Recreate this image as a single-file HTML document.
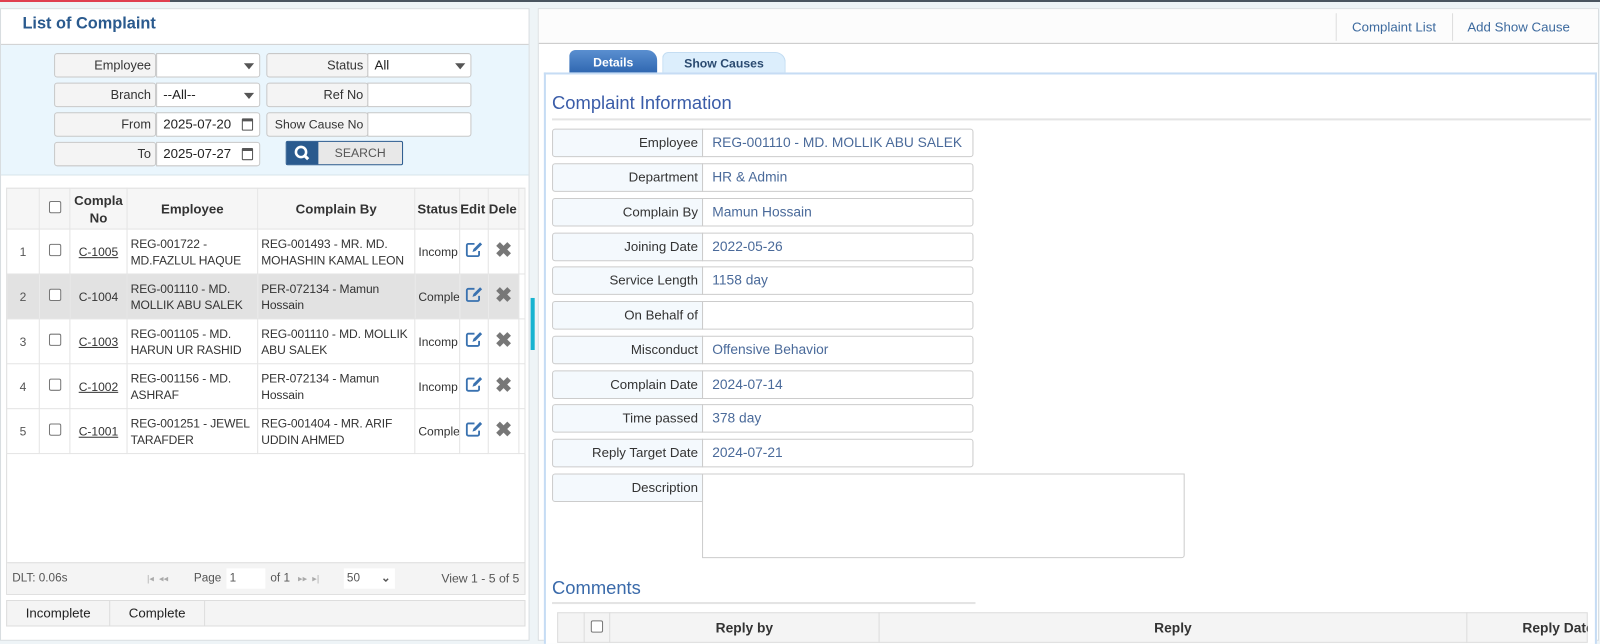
<!DOCTYPE html>
<html><head><meta charset="utf-8"><style>
*{box-sizing:border-box;margin:0;padding:0}
html,body{width:1600px;height:644px;overflow:hidden}
body{background:#eef4f7;font-family:"Liberation Sans",sans-serif;font-size:12.5px;color:#333;position:relative}
#w{position:absolute;left:0;top:0;width:1568px;height:632px;transform:scale(1.0204);transform-origin:0 0}
.a{position:absolute}
.topline{left:0;top:0;width:1600px;height:2px;background:#4a5560}
.topred{left:0;top:0;width:170px;height:2px;background:#e04050}
.panel{background:#fff;border:1px solid #d8dde0}
.lbl{position:absolute;background:#f4f4f4;border:1px solid #c8c8c8;border-radius:3px;text-align:right;padding-right:4px;line-height:22px;font-size:12.5px;color:#333}
.inp{position:absolute;background:#fff;border:1px solid #c8c8c8;border-radius:0 3px 3px 0;line-height:22px;padding-left:6px;font-size:13px;color:#222}
.caret{position:absolute;right:5px;top:9px;width:0;height:0;border-left:5px solid transparent;border-right:5px solid transparent;border-top:6px solid #555}
.cal{position:absolute;right:6px;top:5px;width:11px;height:12px;border:1.5px solid #555;border-top-width:3px;border-radius:1px}
table{border-collapse:collapse;table-layout:fixed}
.g td,.g th{border:1px solid #e4e4e4;overflow:hidden;white-space:nowrap;font-size:11.8px;line-height:16px}
.g th{background:#f6f6f6;font-weight:bold;font-size:13px;color:#333;height:40px}
.g td{height:44px;padding:0 3px;color:#333}
.g td.w{white-space:normal;letter-spacing:-0.1px}
.cb{display:inline-block;width:12px;height:12px;border:1px solid #777;border-radius:2px;background:#fff}
.u{text-decoration:underline}
.x{font-size:20px;font-weight:bold;color:#777;line-height:16px}
.rl{position:absolute;left:541px;width:148px;height:28px;background:#f4f9fd;border:1px solid #ccc;border-radius:3px 0 0 3px;text-align:right;padding-right:4px;line-height:26px;font-size:13px;color:#333}
.rv{position:absolute;left:688px;width:266px;height:28px;background:#fff;border:1px solid #ccc;border-radius:0 3px 3px 0;padding-left:9px;line-height:26px;font-size:13.5px;color:#4a6a9a}
.pg{color:#aaa;font-size:9px}
</style></head><body>
<div class="a topline"></div><div class="a topred"></div>
<div id="w">
<!-- LEFT PANEL -->
<div class="a panel" style="left:0;top:8px;width:519px;height:620px"></div>
<div class="a" style="left:22px;top:15px;font-size:16px;font-weight:bold;color:#2a5a8e">List of Complaint</div>
<div class="a" style="left:1px;top:43px;width:517px;height:1px;background:#ccc"></div>
<div class="a" style="left:1px;top:44px;width:517px;height:128px;background:#eaf6fd;border-bottom:1px solid #d8e4ea"></div>

<div class="lbl" style="left:53px;top:52px;width:100px;height:24px">Employee</div>
<div class="inp" style="left:153px;top:52px;width:102px;height:24px"><span class="caret"></span></div>
<div class="lbl" style="left:53px;top:81px;width:100px;height:24px">Branch</div>
<div class="inp" style="left:153px;top:81px;width:102px;height:24px">--All--<span class="caret"></span></div>
<div class="lbl" style="left:53px;top:110px;width:100px;height:24px">From</div>
<div class="inp" style="left:153px;top:110px;width:102px;height:24px">2025-07-20<span class="cal"></span></div>
<div class="lbl" style="left:53px;top:139px;width:100px;height:24px">To</div>
<div class="inp" style="left:153px;top:139px;width:102px;height:24px">2025-07-27<span class="cal"></span></div>

<div class="lbl" style="left:261px;top:52px;width:100px;height:24px">Status</div>
<div class="inp" style="left:360px;top:52px;width:102px;height:24px">All<span class="caret"></span></div>
<div class="lbl" style="left:261px;top:81px;width:100px;height:24px">Ref No</div>
<div class="inp" style="left:360px;top:81px;width:102px;height:24px"></div>
<div class="lbl" style="left:261px;top:110px;width:100px;height:24px;font-size:12px">Show Cause No</div>
<div class="inp" style="left:360px;top:110px;width:102px;height:24px"></div>

<div class="a" style="left:280px;top:138px;width:115px;height:24px;border:1px solid #2a5a8e;border-radius:2px;background:#e8e8e8">
 <div class="a" style="left:0;top:0;width:31px;height:22px;background:#2a5a8e"><svg width="31" height="22"><circle cx="14" cy="10" r="5" fill="none" stroke="#fff" stroke-width="2.5"/><line x1="17.5" y1="13.5" x2="21" y2="17" stroke="#fff" stroke-width="3"/></svg></div>
 <div class="a" style="left:31px;top:0;width:82px;line-height:22px;text-align:center;color:#555;font-size:12px">SEARCH</div>
</div>

<div class="a" style="left:6px;top:184px;width:509px;height:399px;border:1px solid #ddd;background:#fff"></div>
<table class="g a" style="left:6px;top:184px;width:508px">
<colgroup><col style="width:32px"><col style="width:30px"><col style="width:56px"><col style="width:128px"><col style="width:154px"><col style="width:44px"><col style="width:28px"><col style="width:30px"><col style="width:6px"></colgroup>
<tr><th></th><th><span class="cb"></span></th><th style="line-height:17px">Compla<br>No</th><th>Employee</th><th>Complain By</th><th style="text-align:left;padding-left:2px">Status</th><th style="text-align:left">Edit</th><th style="text-align:left">Dele</th><th></th></tr>
<tr><td style="text-align:center;color:#555">1</td><td style="text-align:center"><span class="cb"></span></td><td class="u" style="text-align:center">C-1005</td><td class="w">REG-001722 - MD.FAZLUL HAQUE</td><td class="w">REG-001493 - MR. MD. MOHASHIN KAMAL LEON</td><td>Incomp</td><td style="text-align:center"><svg width="18" height="16" viewBox="0 0 18 16"><path d="M9 2H3a1.5 1.5 0 0 0-1.5 1.5v9A1.5 1.5 0 0 0 3 14h9a1.5 1.5 0 0 0 1.5-1.5V9" fill="none" stroke="#3a72b0" stroke-width="1.8"/><path d="M7 10l1-3 6.5-6.5 2 2L10 9z" fill="#3a72b0"/></svg></td><td style="text-align:center"><span class="x">✖</span></td><td></td></tr>
<tr style="background:#e2e2e2"><td style="text-align:center;color:#555">2</td><td style="text-align:center"><span class="cb"></span></td><td style="text-align:center">C-1004</td><td class="w">REG-001110 - MD. MOLLIK ABU SALEK</td><td class="w">PER-072134 - Mamun Hossain</td><td>Comple</td><td style="text-align:center"><svg width="18" height="16" viewBox="0 0 18 16"><path d="M9 2H3a1.5 1.5 0 0 0-1.5 1.5v9A1.5 1.5 0 0 0 3 14h9a1.5 1.5 0 0 0 1.5-1.5V9" fill="none" stroke="#3a72b0" stroke-width="1.8"/><path d="M7 10l1-3 6.5-6.5 2 2L10 9z" fill="#3a72b0"/></svg></td><td style="text-align:center"><span class="x">✖</span></td><td style="background:#fff"></td></tr>
<tr><td style="text-align:center;color:#555">3</td><td style="text-align:center"><span class="cb"></span></td><td class="u" style="text-align:center">C-1003</td><td class="w">REG-001105 - MD. HARUN UR RASHID</td><td class="w">REG-001110 - MD. MOLLIK ABU SALEK</td><td>Incomp</td><td style="text-align:center"><svg width="18" height="16" viewBox="0 0 18 16"><path d="M9 2H3a1.5 1.5 0 0 0-1.5 1.5v9A1.5 1.5 0 0 0 3 14h9a1.5 1.5 0 0 0 1.5-1.5V9" fill="none" stroke="#3a72b0" stroke-width="1.8"/><path d="M7 10l1-3 6.5-6.5 2 2L10 9z" fill="#3a72b0"/></svg></td><td style="text-align:center"><span class="x">✖</span></td><td></td></tr>
<tr><td style="text-align:center;color:#555">4</td><td style="text-align:center"><span class="cb"></span></td><td class="u" style="text-align:center">C-1002</td><td class="w">REG-001156 - MD. ASHRAF</td><td class="w">PER-072134 - Mamun Hossain</td><td>Incomp</td><td style="text-align:center"><svg width="18" height="16" viewBox="0 0 18 16"><path d="M9 2H3a1.5 1.5 0 0 0-1.5 1.5v9A1.5 1.5 0 0 0 3 14h9a1.5 1.5 0 0 0 1.5-1.5V9" fill="none" stroke="#3a72b0" stroke-width="1.8"/><path d="M7 10l1-3 6.5-6.5 2 2L10 9z" fill="#3a72b0"/></svg></td><td style="text-align:center"><span class="x">✖</span></td><td></td></tr>
<tr><td style="text-align:center;color:#555">5</td><td style="text-align:center"><span class="cb"></span></td><td class="u" style="text-align:center">C-1001</td><td class="w">REG-001251 - JEWEL TARAFDER</td><td class="w">REG-001404 - MR. ARIF UDDIN AHMED</td><td>Comple</td><td style="text-align:center"><svg width="18" height="16" viewBox="0 0 18 16"><path d="M9 2H3a1.5 1.5 0 0 0-1.5 1.5v9A1.5 1.5 0 0 0 3 14h9a1.5 1.5 0 0 0 1.5-1.5V9" fill="none" stroke="#3a72b0" stroke-width="1.8"/><path d="M7 10l1-3 6.5-6.5 2 2L10 9z" fill="#3a72b0"/></svg></td><td style="text-align:center"><span class="x">✖</span></td><td></td></tr>
</table>
<div class="a" style="left:7px;top:551px;width:507px;height:31px;background:#f4f4f4;border-top:1px solid #ddd;font-size:11.5px;color:#555;line-height:31px">
 <span class="a" style="left:5px">DLT: 0.06s</span>
 <span class="a pg" style="left:137px">|◂ &nbsp;◂◂</span>
 <span class="a" style="left:183px">Page</span>
 <span class="a" style="left:215px;top:5px;width:38px;height:20px;background:#fff;line-height:20px;padding-left:3px">1</span>
 <span class="a" style="left:258px">of 1</span>
 <span class="a pg" style="left:285px">▸▸ &nbsp;▸|</span>
 <span class="a" style="left:330px;top:5px;width:50px;height:20px;background:#fff;line-height:20px;padding-left:3px">50 <span style="position:absolute;right:4px;font-weight:bold">⌄</span></span>
 <span class="a" style="right:5px;font-size:12px">View 1 - 5 of 5</span>
</div>
<div class="a" style="left:6px;top:588px;width:509px;height:26px;background:#f4f4f4;border:1px solid #ddd;font-size:13px;line-height:24px;color:#222">
 <span class="a" style="left:0;width:101px;text-align:center;border-right:1px solid #ddd;height:24px">Incomplete</span>
 <span class="a" style="left:101px;width:93px;text-align:center;border-right:1px solid #ddd;height:24px">Complete</span>
</div>

<div class="a" style="left:520px;top:292px;width:4px;height:51px;background:#17b3d0"></div>

<!-- RIGHT PANEL -->
<div class="a panel" style="left:527px;top:8px;width:1040px;height:620px"></div>
<div class="a" style="left:528px;top:9px;width:1038px;height:34px;background:#fcfcfc;border-bottom:1px solid #c8c8c8"></div>
<div class="a" style="left:1309px;top:13px;width:1px;height:27px;background:#ddd"></div>
<div class="a" style="left:1423px;top:13px;width:1px;height:27px;background:#ddd"></div>
<div class="a" style="left:1325px;top:19px;color:#3d6a9e;font-size:13px">Complaint List</div>
<div class="a" style="left:1438px;top:19px;color:#3d6a9e;font-size:13px">Add Show Cause</div>

<div class="a" style="left:558px;top:49px;width:86px;height:23px;background:linear-gradient(#5a8fd0,#2e66b0);border-radius:6px 10px 0 0;color:#fff;font-weight:bold;font-size:12px;text-align:center;line-height:24px">Details</div>
<div class="a" style="left:649px;top:51px;width:121px;height:21px;background:#dceefc;border:1px solid #c2dcf2;border-bottom:none;border-radius:6px 10px 0 0;color:#2a4a70;font-weight:bold;font-size:12px;text-align:center;line-height:21px">Show Causes</div>
<div class="a" style="left:533px;top:71px;width:1032px;height:560px;border:2px solid #c6dcf4;border-bottom:none;background:#fff"></div>

<div class="a" style="left:541px;top:91px;font-size:18px;color:#3a5ca8">Complaint Information</div>
<div class="a" style="left:541px;top:116px;width:1018px;height:2px;background:#e4e4e4"></div>

<div class="rl" style="top:126px">Employee</div><div class="rv" style="top:126px">REG-001110 - MD. MOLLIK ABU SALEK</div>
<div class="rl" style="top:160px">Department</div><div class="rv" style="top:160px">HR &amp; Admin</div>
<div class="rl" style="top:194px">Complain By</div><div class="rv" style="top:194px">Mamun Hossain</div>
<div class="rl" style="top:228px">Joining Date</div><div class="rv" style="top:228px">2022-05-26</div>
<div class="rl" style="top:261px">Service Length</div><div class="rv" style="top:261px">1158 day</div>
<div class="rl" style="top:295px">On Behalf of</div><div class="rv" style="top:295px"></div>
<div class="rl" style="top:329px">Misconduct</div><div class="rv" style="top:329px">Offensive Behavior</div>
<div class="rl" style="top:363px">Complain Date</div><div class="rv" style="top:363px">2024-07-14</div>
<div class="rl" style="top:396px">Time passed</div><div class="rv" style="top:396px">378 day</div>
<div class="rl" style="top:430px">Reply Target Date</div><div class="rv" style="top:430px">2024-07-21</div>
<div class="rl" style="top:464px">Description</div><div class="rv" style="top:464px;width:473px;height:83px;border-radius:0 0 3px 0"></div>

<div class="a" style="left:541px;top:566px;font-size:18px;color:#3a6aaa">Comments</div>
<div class="a" style="left:541px;top:590px;width:415px;height:2px;background:#e4e4e4"></div>
<div class="a" style="left:546px;top:600px;width:1010px;height:30px;background:#f4f4f4;border:1px solid #ddd"></div>
<div class="a" style="left:572px;top:600px;width:1px;height:30px;background:#ddd"></div>
<div class="a" style="left:597px;top:600px;width:1px;height:30px;background:#ddd"></div>
<div class="a" style="left:861px;top:600px;width:1px;height:30px;background:#ddd"></div>
<div class="a" style="left:1437px;top:600px;width:1px;height:30px;background:#ddd"></div>
<div class="a" style="left:579px;top:608px"><span class="cb"></span></div>
<div class="a" style="left:598px;top:608px;width:263px;text-align:center;font-weight:bold;font-size:13.5px">Reply by</div>
<div class="a" style="left:862px;top:608px;width:575px;text-align:center;font-weight:bold;font-size:13.5px">Reply</div>
<div class="a" style="left:1492px;top:608px;width:64px;overflow:hidden;white-space:nowrap;font-weight:bold;font-size:13.5px">Reply Date</div>
</div>
</body></html>
